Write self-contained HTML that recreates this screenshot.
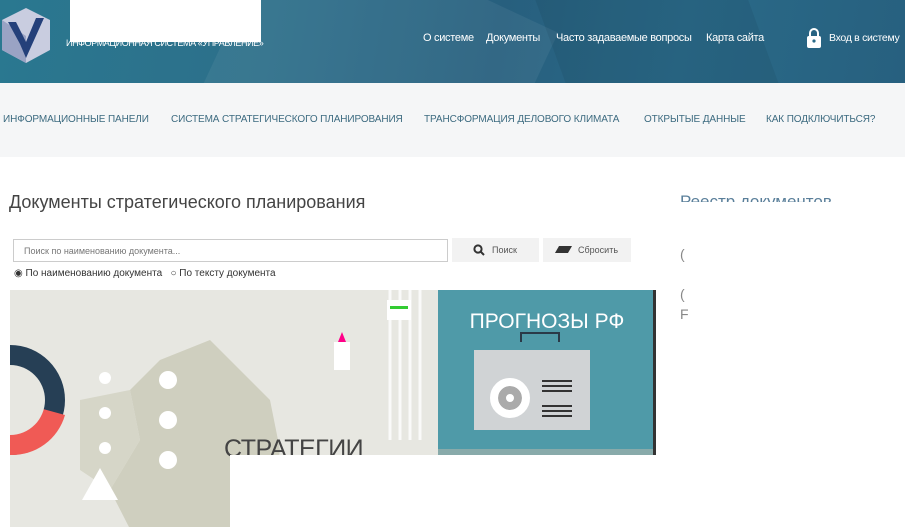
<!DOCTYPE html>
<html><head><meta charset="utf-8"><style>
*{margin:0;padding:0;box-sizing:border-box}
body{width:905px;height:529px;overflow:hidden;background:#fff;font-family:"Liberation Sans",sans-serif;position:relative}
.hdr{position:absolute;left:0;top:0;width:905px;height:83px;background:linear-gradient(100deg,#2a7890 0%,#2d6f8a 30%,#275f7e 55%,#2a6a88 75%,#27607f 100%);overflow:hidden}
.a{position:absolute;color:#fff;font-size:11px;letter-spacing:-0.3px;white-space:nowrap}
.nav{position:absolute;left:0;top:83px;width:905px;height:74px;background:#f5f6f7}
.nav span{position:absolute;top:31px;font-size:10px;color:#3d6b80;letter-spacing:-0.1px;white-space:nowrap}
</style></head><body>
<div class="hdr">
<div style="position:absolute;left:230px;top:-40px;width:300px;height:200px;background:rgba(255,255,255,0.06);transform:rotate(25deg)"></div>
<div style="position:absolute;left:560px;top:-60px;width:200px;height:220px;background:rgba(0,0,0,0.06);transform:rotate(-20deg)"></div>
<svg style="position:absolute;left:2px;top:8px" width="48" height="55" viewBox="0 0 48 55"><polygon points="24,0 48,12 48,42 24,55 0,42 0,12" fill="#c9cde0"/><polygon points="0,12 24,28 24,55 0,42" fill="#9aa3c4"/><path d="M6 14 L18 36 L24 50 L42 10 L34 10 L24 34 L14 14Z" fill="#24407a"/></svg>
<div class="a" style="left:66px;top:38px;font-size:9px;letter-spacing:-0.4px">ИНФОРМАЦИОННАЯ СИСТЕМА «УПРАВЛЕНИЕ»</div>
<div class="a" style="left:423px;top:32px">О системе</div>
<div class="a" style="left:486px;top:32px">Документы</div>
<div class="a" style="left:556px;top:32px">Часто задаваемые вопросы</div>
<div class="a" style="left:706px;top:32px">Карта сайта</div>
<svg style="position:absolute;left:807px;top:28px" width="14" height="20" viewBox="0 0 14 20"><path d="M3 9V5a4 4 0 0 1 8 0v4" stroke="#fff" stroke-width="2" fill="none"/><rect x="0" y="8" width="14" height="12" rx="2" fill="#fff"/><circle cx="7" cy="13" r="1.6" fill="#2a6a88"/></svg>
<div class="a" style="left:829px;top:32px;font-size:10.5px">Вход в систему</div>
</div>
<div style="position:absolute;left:70px;top:0;width:191px;height:42px;background:#fff"></div>
<div class="nav">
<span style="left:3px">ИНФОРМАЦИОННЫЕ ПАНЕЛИ</span>
<span style="left:171px">СИСТЕМА СТРАТЕГИЧЕСКОГО ПЛАНИРОВАНИЯ</span>
<span style="left:424px">ТРАНСФОРМАЦИЯ ДЕЛОВОГО КЛИМАТА</span>
<span style="left:644px">ОТКРЫТЫЕ ДАННЫЕ</span>
<span style="left:766px">КАК ПОДКЛЮЧИТЬСЯ?</span>
</div>
<div style="position:absolute;left:9px;top:192px;font-size:18px;color:#444">Документы стратегического планирования</div>
<div style="position:absolute;left:680px;top:192px;font-size:17px;color:#5a7f9a;height:10px;overflow:hidden">Реестр документов</div>
<div style="position:absolute;left:13px;top:239px;width:435px;height:23px;border:1px solid #ccc;font-size:9px;color:#777;padding:6px 10px">Поиск по наименованию документа...</div>
<div style="position:absolute;left:452px;top:238px;width:87px;height:24px;background:#f2f2f2;font-size:9px;color:#555;padding:7px 0 0 40px"><svg style="position:absolute;left:21px;top:6px" width="12" height="12" viewBox="0 0 12 12"><circle cx="5" cy="5" r="3.6" stroke="#333" stroke-width="2" fill="none"/><path d="M7.5 7.5 L11 11" stroke="#333" stroke-width="2"/></svg>Поиск</div>
<div style="position:absolute;left:543px;top:238px;width:88px;height:24px;background:#f2f2f2;font-size:9px;color:#555;padding:7px 0 0 35px"><span style="position:absolute;left:14px;top:8px;width:13px;height:7px;background:#333;transform:skewX(-30deg)"></span>Сбросить</div>
<div style="position:absolute;left:14px;top:268px;font-size:10px;color:#333">◉ По наименованию документа &nbsp; ○ По тексту документа</div>
<div style="position:absolute;left:10px;top:290px;width:428px;height:237px;background:#e7e7e1;overflow:hidden">
<svg width="428" height="239"><path d="M120 100 L150 70 L200 50 L230 80 L260 110 L270 160 L260 220 L230 239 L120 239 L100 200 L130 150 Z" fill="#cfcfbf"/>
<path d="M70 110 L120 100 L130 150 L100 200 L70 180Z" fill="#d6d6c8"/>
<path d="M380 0 V150 M390 0 V150 M400 0 V150 M410 0 V150" stroke="#fff" stroke-width="3" opacity="0.8"/>
<circle cx="0" cy="110" r="55" fill="#263f55"/><path d="M0 110 L55 125 A55 55 0 0 1 0 165Z" fill="#f05a55"/><circle cx="0" cy="110" r="35" fill="#e7e7e1"/>
<g fill="#fff"><circle cx="158" cy="90" r="9"/><circle cx="158" cy="130" r="9"/><circle cx="158" cy="170" r="9"/><circle cx="95" cy="88" r="6"/><circle cx="95" cy="123" r="6"/><circle cx="95" cy="158" r="6"/><path d="M72 210 L90 178 L108 210Z"/></g>
<rect x="324" y="52" width="16" height="28" fill="#fff"/><path d="M332 42 L336 52 H328Z" fill="#f08"/><rect x="377" y="10" width="24" height="20" fill="#fff"/><rect x="380" y="16" width="18" height="3" fill="#3c3"/></svg>
<div style="position:absolute;left:214px;top:145px;font-size:25px;color:#444;font-weight:300;letter-spacing:-0.5px">СТРАТЕГИИ</div>
</div>
<div style="position:absolute;left:438px;top:290px;width:218px;height:165px;background:#4f9aa8;overflow:hidden">
<div style="position:absolute;left:0;width:218px;top:20px;text-align:center;font-size:21px;color:#fff">ПРОГНОЗЫ РФ</div>
<div style="position:absolute;left:82px;top:42px;width:40px;height:10px;border:2px solid #2a3a48;border-bottom:none"></div>
<div style="position:absolute;left:36px;top:60px;width:116px;height:80px;background:#d0d3d5"></div>
<div style="position:absolute;left:52px;top:88px;width:40px;height:40px;border-radius:50%;background:#fff;border:8px solid #fff;box-shadow:inset 0 0 0 8px #aaa"></div>
<div style="position:absolute;left:104px;top:90px;width:30px;height:2px;background:#333;box-shadow:0 5px 0 #333,0 10px 0 #333,0 25px 0 #333,0 30px 0 #333,0 35px 0 #333"></div>
<div style="position:absolute;left:0;top:159px;width:218px;height:6px;background:#8aa"></div>
<div style="position:absolute;right:0;top:0;width:3px;height:165px;background:#333"></div>
</div>
<div style="position:absolute;left:230px;top:455px;width:426px;height:74px;background:#fff"></div>
<div style="position:absolute;left:680px;top:244px;font-size:14px;color:#888;line-height:20px">(<br><br>(<br>F</div>
</body></html>
